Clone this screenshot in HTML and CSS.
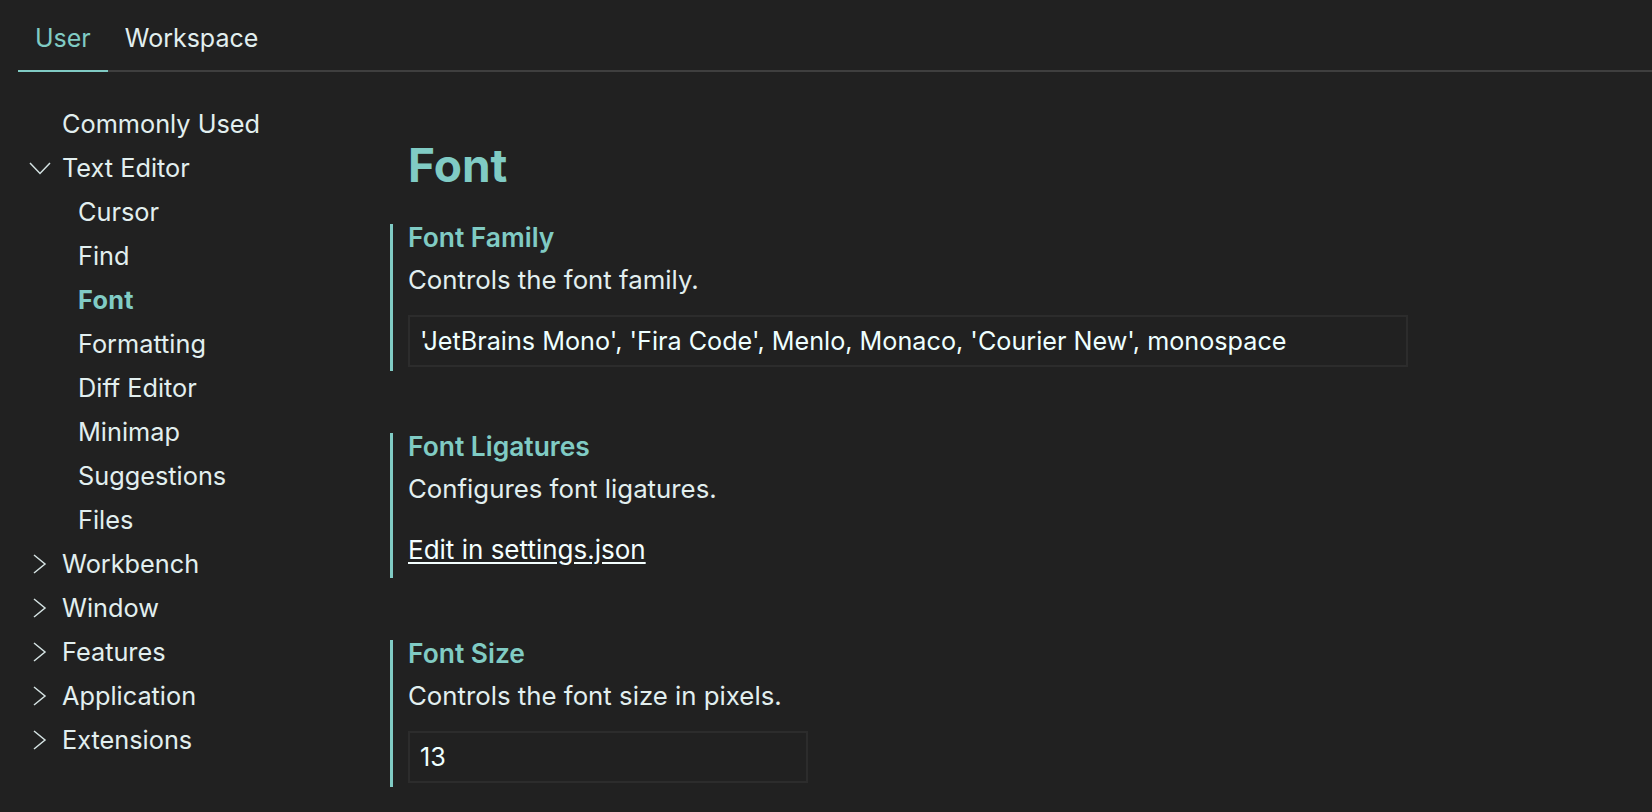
FILE: index.html
```html
<!DOCTYPE html>
<html>
<head>
<meta charset="utf-8">
<link rel="stylesheet" href="styles.css">
</head>
<body>
<div class="tabs">
  <div class="tab active">User</div>
  <div class="tab">Workspace</div>
</div>
<div class="main">
  <nav class="toc">
    <div class="row"><span class="slot"></span>Commonly Used</div>
    <div class="row"><span class="slot"><svg width="22" height="13" viewBox="0 0 22 13"><path d="M1 1 L11 11.5 L21 1" fill="none" stroke="#d4e2e2" stroke-width="1.5"/></svg></span>Text Editor</div>
    <div class="row child">Cursor</div>
    <div class="row child">Find</div>
    <div class="row child selected">Font</div>
    <div class="row child">Formatting</div>
    <div class="row child">Diff Editor</div>
    <div class="row child">Minimap</div>
    <div class="row child">Suggestions</div>
    <div class="row child">Files</div>
    <div class="row"><span class="slot"><svg width="14" height="20" viewBox="0 0 14 20"><path d="M1 1 L12 10 L1 19" fill="none" stroke="#d4e2e2" stroke-width="1.5"/></svg></span>Workbench</div>
    <div class="row"><span class="slot"><svg width="14" height="20" viewBox="0 0 14 20"><path d="M1 1 L12 10 L1 19" fill="none" stroke="#d4e2e2" stroke-width="1.5"/></svg></span>Window</div>
    <div class="row"><span class="slot"><svg width="14" height="20" viewBox="0 0 14 20"><path d="M1 1 L12 10 L1 19" fill="none" stroke="#d4e2e2" stroke-width="1.5"/></svg></span>Features</div>
    <div class="row"><span class="slot"><svg width="14" height="20" viewBox="0 0 14 20"><path d="M1 1 L12 10 L1 19" fill="none" stroke="#d4e2e2" stroke-width="1.5"/></svg></span>Application</div>
    <div class="row"><span class="slot"><svg width="14" height="20" viewBox="0 0 14 20"><path d="M1 1 L12 10 L1 19" fill="none" stroke="#d4e2e2" stroke-width="1.5"/></svg></span>Extensions</div>
  </nav>
  <section class="content">
    <h1 class="heading">Font</h1>
    <div class="setting">
      <div class="title">Font Family</div>
      <div class="desc">Controls the font family.</div>
      <div class="input wide">'JetBrains Mono', 'Fira Code', Menlo, Monaco, 'Courier New', monospace</div>
    </div>
    <div class="setting">
      <div class="title">Font Ligatures</div>
      <div class="desc">Configures font ligatures.</div>
      <a class="link">Edit in settings.json</a>
    </div>
    <div class="setting">
      <div class="title">Font Size</div>
      <div class="desc">Controls the font size in pixels.</div>
      <div class="input narrow">13</div>
    </div>
  </section>
</div>
</body>
</html>
```
FILE: styles.css
```css
html, body {
  margin: 0;
  padding: 0;
  background: #212121;
  height: 100%;
  overflow: hidden;
}
body {
  font-family: Inter, "Noto Sans", sans-serif;
  color: #e2efef;
}
.tabs {
  display: flex;
  margin-left: 18px;
  height: 70px;
  border-bottom: 2px solid #3f3f3f;
}
.tab {
  padding: 7px 17px 0;
  height: 63px;
  line-height: 63px;
  font-size: 25px;
  color: #e2efef;
}
.tab.active {
  color: #80cbc4;
  border-bottom: 2px solid #80cbc4;
}
.main {
  display: flex;
  margin-top: 28px;
  margin-left: 18px;
}
.toc {
  width: 372px;
  flex: none;
  font-size: 25.3px;
  padding-top: 2px;
}
.row {
  display: flex;
  align-items: center;
  height: 44px;
  line-height: 44px;
  color: #e2efef;
}
.slot {
  width: 44px;
  display: flex;
  justify-content: center;
  align-items: center;
  flex: none;
}
.row.child {
  padding-left: 60px;
}
.row.selected {
  color: #80cbc4;
  font-weight: 700;
  letter-spacing: 0.3px;
}
.content {
  flex: 1;
}
.heading {
  margin: 35px 0 29px 18px;
  font-size: 46px;
  line-height: 60px;
  font-weight: 700;
  color: #80cbc4;
}
.setting {
  border-left: 3px solid #80cbc4;
  padding: 0 0 4px 15px;
  margin-bottom: 62px;
}
.title {
  font-size: 26.4px;
  font-weight: 600;
  color: #80cbc4;
  line-height: 26px;
}
.desc {
  font-size: 25.8px;
  margin-top: 17px;
  line-height: 26px;
  color: #e2efef;
}
.input {
  font-size: 25.2px;
  margin-top: 22px;
  box-sizing: border-box;
  height: 52px;
  border: 2px solid #2c2c2c;
  padding-left: 10px;
  line-height: 48px;
  color: #eeffff;
}
.input.wide { width: 1000px; }
.input.narrow { width: 400px; }
.link {
  display: block;
  font-size: 26px;
  margin: 35px 0 11px;
  line-height: 26px;
  color: #f4ffff;
  text-decoration: underline;
  text-underline-offset: 3px;
}
```
